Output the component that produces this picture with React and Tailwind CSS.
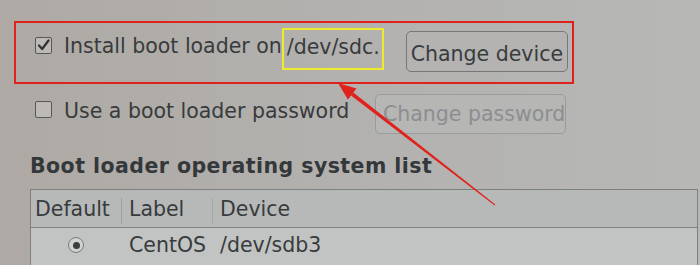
import React from "react";

function CheckBox({ checked }) {
  return (
    <span className="flex h-[17px] w-[17px] shrink-0 items-center justify-center rounded-[2px] border-[1.5px] border-[#55575a] bg-[#bdbab6]">
      {checked && (
        <svg width="13" height="13" viewBox="0 0 13 13">
          <path d="M2 6.5 L5.2 10 L11.5 1.5" fill="none" stroke="#2f3234" strokeWidth="2.2" strokeLinecap="round" strokeLinejoin="round" />
        </svg>
      )}
    </span>
  );
}

function Arrow() {
  return (
    <svg className="pointer-events-none absolute left-0 top-0" width="700" height="265" viewBox="0 0 700 265">
      <polygon points="351,95.4 353.3,92.6 495.3,204.6 494.7,205.4" fill="#e0221c" />
      <polygon points="338,83 347.9,99.5 356.5,88.5" fill="#e0221c" />
    </svg>
  );
}

export default function App() {
  return (
    <div className="relative h-[265px] w-[700px] overflow-hidden bg-[linear-gradient(90deg,#aea9a4,#b3b2b0_55%,#b7b7b6)] font-['DejaVu_Sans',sans-serif] text-[20.5px] leading-[24px] text-[#383b3d]">
      {/* highlighted row */}
      <div className="ml-[14px] mt-[21px] flex h-[63px] w-[560px] items-start border-2 border-[#e0221c] pl-[19px]">
        <span className="mt-[14px]">
          <CheckBox checked />
        </span>
        <span className="ml-[12px] mt-[11px] whitespace-nowrap">Install boot loader on</span>
        <span className="mt-[5px] whitespace-nowrap border-2 border-[#eeea2c] pb-[9px] pl-[3px] pr-[2px] pt-[5px]">/dev/sdc.</span>
        <button
          type="button"
          className="ml-[22px] mt-[8px] h-[41px] w-[162px] whitespace-nowrap rounded-[5px] border border-[#75777a] bg-[#b4b3b1] pt-[5px] text-[#393c3e]"
        >
          Change device
        </button>
      </div>

      <div className="ml-[35px] mt-[10px] flex items-start">
        <span className="mt-[7px]">
          <CheckBox />
        </span>
        <span className="ml-[12px] mt-[5px] w-[311px] whitespace-nowrap">Use a boot loader password</span>
        <button
          type="button"
          className="flex h-[40px] w-[191px] items-start overflow-visible whitespace-nowrap rounded-[5px] border border-[#9a9b9c] bg-[#b6b6b5] pl-[7px] pt-[7px] text-[#8c8e8f]"
        >
          Change password
        </button>
      </div>

      <h2 className="ml-[30px] mt-[20px] whitespace-nowrap font-bold tracking-[0.45px] text-[#34383b]">Boot loader operating system list</h2>

      <div className="ml-[30px] mt-[11px] w-[668px] border border-[#7e8080]">
        <div className="flex h-[38px] items-start border-b border-[#7e8080] bg-[#b7b9b9] pt-[7px]">
          <span className="w-[90px] pl-[4px]">Default</span>
          <span className="mt-[1px] h-[26px] w-px bg-[#9ea0a0]" />
          <span className="w-[90px] pl-[7px]">Label</span>
          <span className="mt-[1px] h-[26px] w-px bg-[#a6a8a8]" />
          <span className="pl-[7px]">Device</span>
        </div>
        <div className="flex h-[40px] items-start bg-[#c2c4c4] pt-[5px]">
          <span className="flex w-[90px] justify-center pt-[4px]">
            <span className="flex h-[16px] w-[16px] items-center justify-center rounded-full border border-[#7a7c7c] bg-[#cfd0d0]">
              <span className="h-[7px] w-[7px] rounded-full bg-[#3a3c3e]" />
            </span>
          </span>
          <span className="w-[91px] pl-[8px]">CentOS</span>
          <span className="pl-[8px]">/dev/sdb3</span>
        </div>
      </div>

      <Arrow />
    </div>
  );
}
